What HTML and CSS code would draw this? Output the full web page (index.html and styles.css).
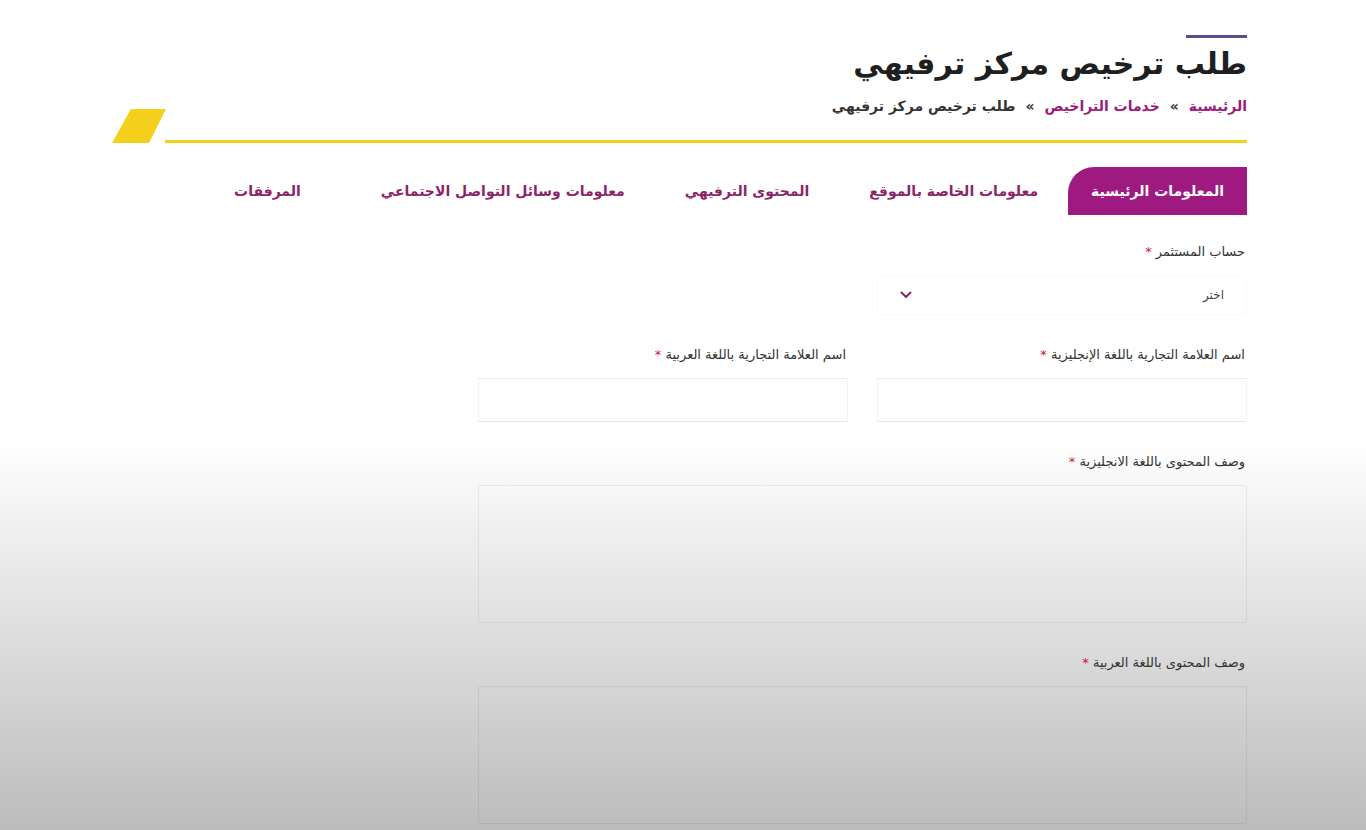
FILE: index.html
```html
<!DOCTYPE html>
<html lang="ar" dir="rtl">
<head>
<meta charset="utf-8">
<title>طلب ترخيص مركز ترفيهي</title>
<link rel="stylesheet" href="styles.css">
</head>
<body>
<div class="page">
  <header class="head">
    <div class="accent"></div>
    <h1 class="title">طلب ترخيص مركز ترفيهي</h1>
    <nav class="crumbs">
      <a class="crumb-link">الرئيسية</a>
      <span class="sep">»</span>
      <a class="crumb-link">خدمات التراخيص</a>
      <span class="sep">»</span>
      <span class="crumb-current">طلب ترخيص مركز ترفيهي</span>
    </nav>
  </header>

  <div class="rule">
    <div class="rule-line"></div>
    <svg class="rule-flag" width="54" height="34" viewBox="0 0 54 34"><polygon points="19,0 54,0 37,34 0,34" fill="#f4cf1c"/></svg>
  </div>

  <ul class="tabs">
    <li class="tab active">المعلومات الرئيسية</li>
    <li class="tab">معلومات الخاصة بالموقع</li>
    <li class="tab">المحتوى الترفيهي</li>
    <li class="tab">معلومات وسائل التواصل الاجتماعي</li>
    <li class="tab last">المرفقات</li>
  </ul>

  <form class="form">
    <div class="field">
      <label class="label">حساب المستثمر <span class="req">*</span></label>
      <div class="select">
        <span class="select-text">اختر</span>
        <svg class="chev" width="12" height="8" viewBox="0 0 12 8"><path d="M1.5 1.5 L6 6 L10.5 1.5" fill="none" stroke="#7c2a6b" stroke-width="2" stroke-linecap="round" stroke-linejoin="round"/></svg>
      </div>
    </div>
    <div class="field"></div>

    <div class="field">
      <label class="label">اسم العلامة التجارية باللغة الإنجليزية <span class="req">*</span></label>
      <div class="input"></div>
    </div>
    <div class="field">
      <label class="label">اسم العلامة التجارية باللغة العربية <span class="req">*</span></label>
      <div class="input"></div>
    </div>

    <div class="field wide">
      <label class="label">وصف المحتوى باللغة الانجليزية <span class="req">*</span></label>
      <div class="textarea"></div>
    </div>

    <div class="field wide">
      <label class="label">وصف المحتوى باللغة العربية <span class="req">*</span></label>
      <div class="textarea"></div>
    </div>
  </form>
</div>
</body>
</html>
```
FILE: styles.css
```css
html, body {
  margin: 0;
  padding: 0;
}
body {
  height: 830px;
  overflow: hidden;
  background: linear-gradient(to bottom, #ffffff 0px, #ffffff 440px, #bcbcbc 830px);
  font-family: "DejaVu Sans", "Noto Sans", sans-serif;
  color: #2e2e2e;
}
.page {
  margin: 0 119px 0 112px;
}
.head {
  padding-top: 35px;
  display: flex;
  flex-direction: column;
  align-items: flex-start;
}
.accent {
  width: 61px;
  height: 3px;
  background: #5b4c8c;
}
.title {
  margin: 4px 0 0;
  font-size: 30px;
  line-height: 44px;
  font-weight: 700;
  color: #1f1f1f;
}
.crumbs {
  margin-top: 9px;
  font-size: 14px;
  font-weight: 700;
  line-height: 22px;
  display: flex;
  gap: 10px;
}
.crumb-link {
  color: #9b1b7e;
}
.sep {
  color: #333;
}
.crumb-current {
  color: #333;
}
.rule {
  margin-top: -8px;
  height: 34px;
  display: flex;
  align-items: flex-end;
}
.rule-line {
  flex: 1;
  height: 3px;
  background: #f4cf1c;
}
.rule-flag {
  display: block;
  margin-right: -1px;
}
.tabs {
  list-style: none;
  margin: 24px 0 0;
  padding: 0;
  display: flex;
  height: 48px;
}
.tab {
  display: flex;
  align-items: center;
  padding: 0 30px;
  font-size: 14px;
  font-weight: 700;
  color: #8d2468;
  white-space: nowrap;
}
.tab.last {
  padding-right: 50px;
}
.tab.active {
  background: #9e1a80;
  color: #ffffff;
  padding: 0 23px;
  border-top-left-radius: 26px;
}
.form {
  width: 769px;
  padding-top: 28px;
  display: grid;
  grid-template-columns: 370px 370px;
  column-gap: 29px;
  row-gap: 31px;
}
.field {
  display: flex;
  flex-direction: column;
}
.field.wide {
  grid-column: 1 / span 2;
}
.label {
  padding-right: 2px;
  font-size: 13px;
  line-height: 18px;
  color: #333;
  margin-bottom: 14px;
}
.req {
  color: #cc1740;
  font-size: 13px;
}
.select {
  height: 40px;
  display: flex;
  align-items: center;
  justify-content: space-between;
  padding: 0 22px 0 22px;
  border: 1px solid #fafafa;
  box-sizing: border-box;
}
.select-text {
  font-size: 12px;
  color: #444;
}
.chev {
  display: block;
}
.input {
  height: 42px;
  border: 1px solid #f3f3f3;
  border-top-color: #ebebeb;
  border-bottom-color: #e6e6e6;
}
.textarea {
  height: 136px;
  border: 1px solid rgba(0, 0, 0, 0.06);
  border-radius: 2px;
}
```
